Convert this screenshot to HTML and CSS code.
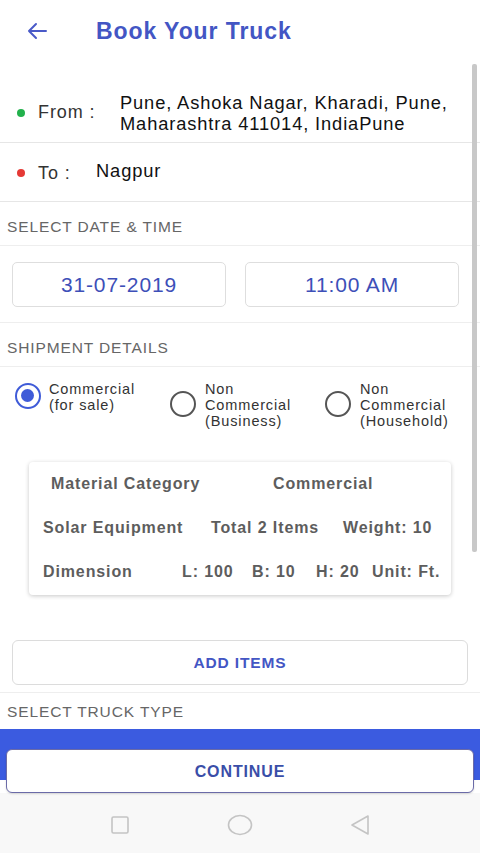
FILE: index.html
```html
<!DOCTYPE html>
<html>
<head>
<meta charset="utf-8">
<link rel="stylesheet" href="styles.css">
</head>
<body>
<div class="app">
  <header class="topbar">
    <svg class="back" width="24" height="24" viewBox="0 0 24 24"><path d="M21 12H4M11 5l-7 7 7 7" fill="none" stroke="#4a5ac8" stroke-width="2" stroke-linecap="round" stroke-linejoin="round"/></svg>
    <h1 class="title">Book Your Truck</h1>
  </header>
  <main class="content">
    <div class="scrollbar"></div>
    <section class="loc loc-from">
      <div class="loc-label"><span class="dot green"></span><span>From :</span></div>
      <div class="loc-value">Pune, Ashoka Nagar, Kharadi, Pune, Maharashtra 411014, IndiaPune</div>
    </section>
    <section class="loc loc-to">
      <div class="loc-label"><span class="dot red"></span><span>To :</span></div>
      <div class="loc-value to-value">Nagpur</div>
    </section>
    <div class="section-head">SELECT DATE &amp; TIME</div>
    <section class="datetime">
      <div class="pick">31-07-2019</div>
      <div class="pick">11:00 AM</div>
    </section>
    <div class="section-head">SHIPMENT DETAILS</div>
    <section class="radios">
      <div class="radio-opt opt1"><span class="radio checked"></span><span class="radio-text">Commercial<br>(for sale)</span></div>
      <div class="radio-opt opt2"><span class="radio"></span><span class="radio-text">Non<br>Commercial<br>(Business)</span></div>
      <div class="radio-opt opt3"><span class="radio"></span><span class="radio-text">Non<br>Commercial<br>(Household)</span></div>
    </section>
    <section class="card">
      <div class="card-row r1"><span>Material Category</span><span>Commercial</span></div>
      <div class="card-row r2"><span>Solar Equipment</span><span>Total 2 Items</span><span>Weight: 10</span></div>
      <div class="card-row r3"><span>Dimension</span><span>L: 100</span><span>B: 10</span><span>H: 20</span><span>Unit: Ft.</span></div>
    </section>
    <div class="add-wrap"><div class="add-btn">ADD ITEMS</div></div>
    <div class="section-head last">SELECT TRUCK TYPE</div>
  </main>
  <div class="bottom">
    <div class="blue-band"></div>
    <div class="continue">CONTINUE</div>
  </div>
  <nav class="navbar">
    <svg width="20" height="20" viewBox="0 0 20 20"><rect x="2" y="2" width="16" height="16" rx="1.5" fill="none" stroke="#c4c4c4" stroke-width="1.6"/></svg>
    <svg width="26" height="22" viewBox="0 0 26 22"><ellipse cx="13" cy="11" rx="11.5" ry="9.5" fill="none" stroke="#c4c4c4" stroke-width="1.6"/></svg>
    <svg width="22" height="22" viewBox="0 0 22 22"><path d="M19 2 L3 11 L19 20 Z" fill="none" stroke="#c4c4c4" stroke-width="1.6" stroke-linejoin="round"/></svg>
  </nav>
</div>
</body>
</html>
```
FILE: styles.css
```css
* { box-sizing: border-box; }
html, body { margin: 0; padding: 0; }
body { font-family: "Liberation Sans", Arial, sans-serif; background: #fff; color: #222; letter-spacing: 0.055em; }
.app { width: 480px; height: 853px; display: flex; flex-direction: column; overflow: hidden; position: relative; }

.topbar { height: 62px; display: flex; align-items: center; padding-left: 25px; flex-shrink: 0; }
.back { margin-right: 47px; }
.title { margin: 0; font-size: 23px; font-weight: 700; color: #4356c4; letter-spacing: 0.04em; }

.content { position: relative; flex: 1; min-height: 0; overflow: hidden; display: flex; flex-direction: column; }
.scrollbar { position: absolute; right: 3px; top: 2px; width: 5px; height: 488px; background: #c8c8c8; border-radius: 2px; }

.loc { display: flex; border-bottom: 1px solid #e6e6e6; flex-shrink: 0; }
.loc-from { height: 81px; align-items: center; padding-top: 21px; }
.loc-to { height: 59px; align-items: center; }
.loc-label { display: flex; align-items: center; font-size: 18px; color: #333; padding-left: 17px; flex-shrink: 0; white-space: nowrap; }
.loc-from .loc-label { width: 120px; }
.loc-to .loc-label { width: 96px; padding-top: 2px; }
.dot { width: 8px; height: 8px; border-radius: 50%; margin-right: 13px; }
.green { background: #22b14c; }
.red { background: #e53935; }
.loc-value { font-size: 18.3px; line-height: 21px; color: #111; }
.to-value { margin-top: -3px; }

.section-head { font-size: 15.5px; color: #666; padding: 6px 7px 0; height: 44px; display: flex; align-items: center; border-bottom: 1px solid #eeeeee; flex-shrink: 0; }
.section-head.last { border-bottom: none; height: 36px; align-items: flex-start; padding-top: 10px; }

.datetime { display: grid; grid-template-columns: 214px 214px; column-gap: 19px; padding: 16px 12px 15px; border-bottom: 1px solid #eeeeee; flex-shrink: 0; }
.pick { height: 45px; border: 1px solid #dedede; border-radius: 5px; display: flex; align-items: center; justify-content: center; font-size: 21px; color: #3d4fb8; }

.radios { display: flex; padding: 14px 0 0 15px; height: 93px; flex-shrink: 0; }
.radio-opt { display: flex; align-items: flex-start; width: 155px; }
.radio-text { font-size: 14.5px; line-height: 16px; color: #333; }
.radio { width: 26px; height: 26px; border-radius: 50%; border: 2px solid #555; margin-right: 9px; margin-top: 2px; flex-shrink: 0; position: relative; }
.radio.checked { border-color: #3f5bd8; border-width: 2.5px; margin-right: 8px; }
.radio.checked::after { content: ""; position: absolute; left: 4px; top: 4px; width: 13px; height: 13px; border-radius: 50%; background: #3f5bd8; }
.opt2 .radio, .opt3 .radio { margin-top: 10px; }

.card { margin: 2px 29px 0 29px; height: 133px; flex-shrink: 0; border-radius: 4px; box-shadow: 0 1px 4px rgba(0,0,0,0.22); padding: 0 0 0 14px; display: flex; flex-direction: column; font-size: 16px; font-weight: 700; color: #5d5d5d; }
.card-row { height: 44px; display: grid; align-items: center; white-space: nowrap; }
.r1 { padding-left: 8px; grid-template-columns: 222px auto; }
.r2 { grid-template-columns: 168px 132px auto; }
.r3 { grid-template-columns: 139px 70px 64px 56px auto; }

.add-wrap { padding: 45px 12px 7px 12px; border-bottom: 1px solid #eeeeee; flex-shrink: 0; }
.add-btn { height: 45px; border: 1px solid #dcdcdc; border-radius: 6px; display: flex; align-items: center; justify-content: center; font-size: 15.5px; font-weight: 700; color: #4356c4; }

.bottom { position: relative; height: 64px; flex-shrink: 0; }
.blue-band { height: 51px; background: #3b5be0; }
.continue { position: absolute; left: 6px; right: 6px; top: 20px; height: 44px; background: #fff; border: 1.5px solid #6b6ba8; border-radius: 6px; box-shadow: 0 1px 2px rgba(0,0,0,0.15); display: flex; align-items: center; justify-content: center; font-size: 16px; font-weight: 700; color: #3a4ea8; padding-top: 1px; }

.navbar { height: 60px; padding-top: 4px; background: #f8f8f8; display: grid; grid-template-columns: repeat(3, 120px); justify-content: center; justify-items: center; align-items: center; flex-shrink: 0; }
```
